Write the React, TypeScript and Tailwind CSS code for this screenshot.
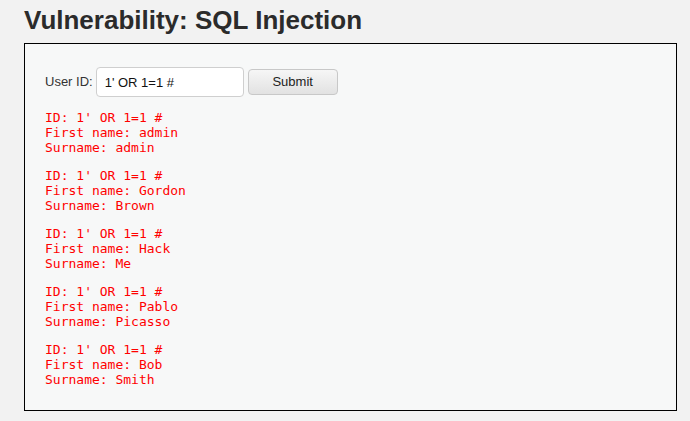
export default function App() {
  const rows = [
    ['admin', 'admin'],
    ['Gordon', 'Brown'],
    ['Hack', 'Me'],
    ['Pablo', 'Picasso'],
    ['Bob', 'Smith'],
  ]

  return (
    <div className="min-h-[421px] w-[690px] bg-[#f2f2f2] pl-[24px] pt-[3px] font-['Liberation_Sans',Arial,sans-serif] text-[#222]">
      <h1 className="text-[26px] font-bold leading-[34px] text-[#2b2b2b]">Vulnerability: SQL Injection</h1>
      <div className="mt-[6px] w-[653px] border border-black bg-[#f7f8f8] px-[20px] pt-[23px] pb-[23px]">
        <form className="flex items-center" onSubmit={e => e.preventDefault()}>
          <label className="mr-[3px] text-[13px] text-[#333]">User ID:</label>
          <input
            type="text"
            defaultValue="1' OR 1=1 #"
            className="h-[30px] w-[148px] rounded-[4px] border border-[#cfcfcf] bg-white px-[8px] text-[13px] text-[#111] outline-none"
          />
          <button
            type="submit"
            className="ml-[4px] h-[26px] w-[90px] rounded-[4px] border border-[#c8c8c8] bg-gradient-to-b from-[#f6f6f6] to-[#e2e2e2] text-[13px] text-[#222]"
          >
            Submit
          </button>
        </form>
        <div className="mt-[13px] flex flex-col gap-[13px] font-['DejaVu_Sans_Mono',monospace] text-[13px] leading-[15px] text-[#ff0000]">
          {rows.map(([first, last], i) => (
            <pre key={i} className="font-['DejaVu_Sans_Mono',monospace]">
              {`ID: 1' OR 1=1 #\nFirst name: ${first}\nSurname: ${last}`}
            </pre>
          ))}
        </div>
      </div>
    </div>
  )
}
